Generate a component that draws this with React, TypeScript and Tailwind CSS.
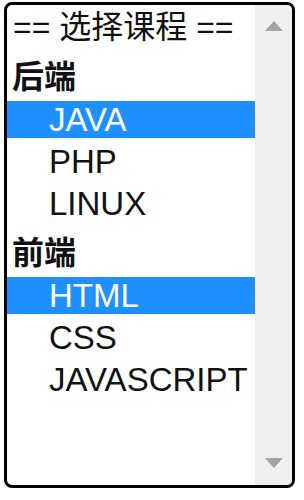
type Row =
  | { kind: "placeholder"; text: string }
  | { kind: "group"; text: string }
  | { kind: "option"; text: string; selected?: boolean };

const rows: Row[] = [
  { kind: "placeholder", text: "== 选择课程 ==" },
  { kind: "group", text: "后端" },
  { kind: "option", text: "JAVA", selected: true },
  { kind: "option", text: "PHP" },
  { kind: "option", text: "LINUX" },
  { kind: "group", text: "前端" },
  { kind: "option", text: "HTML", selected: true },
  { kind: "option", text: "CSS" },
  { kind: "option", text: "JAVASCRIPT" },
];

const font = {
  fontFamily: '"Liberation Sans", Arial, "Noto Sans CJK SC", sans-serif',
};

const ListRow = ({ row }: { row: Row }) => {
  if (row.kind === "placeholder") {
    return (
      <div className="flex h-[42px] items-center whitespace-nowrap pl-[6px] text-[32px] leading-none text-[#111]">
        {row.text}
      </div>
    );
  }
  if (row.kind === "group") {
    return (
      <div className="mt-[8px] flex h-[42px] items-center whitespace-nowrap pl-[5px] text-[32px] font-bold leading-none text-[#111]">
        {row.text}
      </div>
    );
  }
  return (
    <div className="flex h-[42px] items-center">
      <div
        className={`flex h-[37px] w-full items-center whitespace-nowrap pl-[42px] text-[33px] leading-none ${
          row.selected ? "bg-[#1e90ff] text-white" : "text-[#111]"
        }`}
      >
        {row.text}
      </div>
    </div>
  );
};

const App = () => {
  return (
    <div className="h-[500px] w-[304px] bg-white pl-[4px] pt-[2px]" style={font}>
      <div className="flex h-[486px] w-[291px] overflow-hidden rounded-[8px] border-[3px] border-black bg-white">
        <div className="flex-1 overflow-hidden pt-[1px]">
          {rows.map((row, i) => (
            <ListRow key={i} row={row} />
          ))}
        </div>
        <div className="flex w-[37px] flex-col items-center justify-between bg-[#f0f0f0] pb-[17px] pt-[16px]">
          <svg width="18" height="10" viewBox="0 0 18 10">
            <polygon points="9,0 18,10 0,10" fill="#a3a3a3" />
          </svg>
          <svg width="18" height="10" viewBox="0 0 18 10">
            <polygon points="0,0 18,0 9,10" fill="#a3a3a3" />
          </svg>
        </div>
      </div>
    </div>
  );
};

export default App;
